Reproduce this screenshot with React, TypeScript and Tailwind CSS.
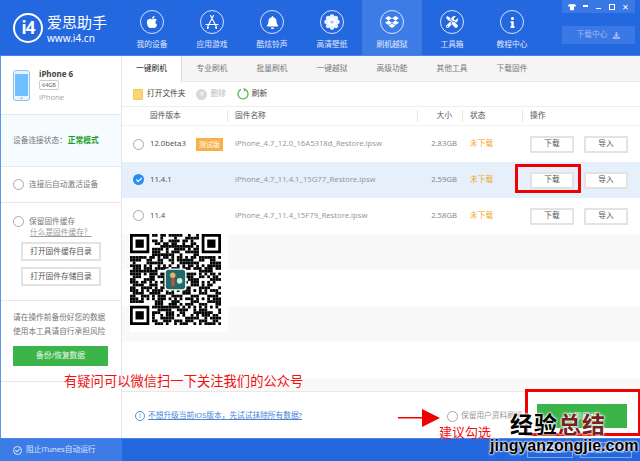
import React from "react";
import { FaApple, FaBell, FaDropbox, FaTools, FaInfo, FaTshirt, FaDownload, FaCheck } from "react-icons/fa";

const font = "font-['Noto_Sans','Noto_Sans_CJK_SC',sans-serif]";

function Ring({ children }: { children: React.ReactNode }) {
  return (
    <div className="w-6 h-6 rounded-full border border-white/80 flex items-center justify-center text-white">
      {children}
    </div>
  );
}

function AppStoreIcon() {
  return (
    <svg width="16" height="16" viewBox="0 0 16 16" fill="none" stroke="white" strokeWidth="1.1" strokeLinecap="round">
      <path d="M9.5 1.5 3.5 13M6.5 1.5l6 11.5M2 10.5h12M4.5 13.5l-1 1M11.5 13.5l1 1" />
    </svg>
  );
}

function FlowerIcon() {
  return (
    <svg width="16" height="16" viewBox="0 0 16 16" fill="white">
      {[0, 45, 90, 135, 180, 225, 270, 315].map((a) => (
        <ellipse key={a} cx="8" cy="3.6" rx="2.4" ry="3.4" transform={`rotate(${a} 8 8)`} opacity="0.9" />
      ))}
      <circle cx="8" cy="8" r="1.6" fill="#a9c6f3" />
    </svg>
  );
}

const navItems: { label: string; icon: React.ReactNode; active?: boolean }[] = [
  { label: "我的设备", icon: <FaApple size={14} /> },
  { label: "应用游戏", icon: <AppStoreIcon /> },
  { label: "酷炫铃声", icon: <FaBell size={13} /> },
  { label: "高清壁纸", icon: <FlowerIcon /> },
  { label: "刷机越狱", icon: <FaDropbox size={14} />, active: true },
  { label: "工具箱", icon: <FaTools size={12} /> },
  { label: "教程中心", icon: <FaInfo size={11} /> },
];

function Header() {
  return (
    <header className="h-14 flex bg-[#2468e0] shrink-0 border-b border-[#4a84e8]">
      <div className="w-[122px] pl-[13px] flex items-center gap-[4px] shrink-0">
        <div className="w-[30px] h-[30px] rounded-full border-2 border-white flex items-center justify-center text-white text-[17px] font-bold leading-none tracking-[-1px]">
          i4
        </div>
        <div className="flex flex-col text-white">
          <span className="text-[15px] leading-[20px]">爱思助手</span>
          <span className="text-[10px] leading-[12px]">www.i4.cn</span>
        </div>
      </div>
      <nav className="flex">
        {navItems.map((n) => (
          <div
            key={n.label}
            className={`w-[60px] flex flex-col items-center pt-[10px] gap-[4px] ${n.active ? "bg-[#3d7ce6]" : ""}`}
          >
            <Ring>{n.icon}</Ring>
            <span className="text-[7.7px] leading-[12px] text-white/85">{n.label}</span>
          </div>
        ))}
      </nav>
      <div className="ml-auto mr-[5px] w-[73px] flex flex-col">
        <div className="h-[13px] bg-[#3a78e5] flex items-center justify-around px-[2px] text-white">
          <FaTshirt size={8} />
          <span className="w-[5px] h-[4px] border-t-2 border-white" />
          <span className="w-[5px] h-[1px] mt-[4px] bg-white" />
          <span className="w-[6px] h-[6px] border border-white" />
          <span className="text-[8px] leading-none">✕</span>
        </div>
        <div className="mt-[13px] h-[18px] bg-[#3a78e5] flex items-center justify-center gap-[6px] text-[7.7px] text-white/50">
          下载中心
          <FaDownload size={7} />
        </div>
      </div>
    </header>
  );
}

function Radio() {
  return <span className="w-[11px] h-[11px] rounded-full border border-[#a8a8a8] bg-white shrink-0" />;
}

function OutlineBtn({ children, className = "" }: { children: React.ReactNode; className?: string }) {
  return (
    <div className={`border-2 border-[#e3e3e3] bg-white flex items-center justify-center text-[7.7px] text-[#555] ${className}`}>
      {children}
    </div>
  );
}

function Sidebar() {
  return (
    <aside className="w-[122px] shrink-0 border-l border-l-[#5f95ec] border-r border-r-[#e6e6e6] bg-white flex flex-col text-[7.7px] text-[#777]">
      <div className="h-[59px] pl-[12px] flex items-center gap-[9px] border-b border-[#e8e8e8]">
        <svg width="17" height="31" viewBox="0 0 17 31">
          <rect x="0.5" y="0.5" width="16" height="30" rx="2.5" fill="#eaf4ff" stroke="#8cc4f5" />
          <rect x="2" y="4" width="13" height="22" fill="#70c0ff" />
          <circle cx="8.5" cy="28.3" r="1" fill="#70c0ff" />
        </svg>
        <div className="flex flex-col items-start">
          <span className="text-[8px] leading-[11px] font-bold text-[#444]">iPhone 6</span>
          <span className="border border-[#ccc] rounded-[2px] text-[5.5px] leading-[8px] px-[2px] my-[1px] text-[#666]">64GB</span>
          <span className="text-[7.7px] leading-[12px] text-[#aaa]">iPhone</span>
        </div>
      </div>
      <div className="h-[52px] pl-[12px] flex items-center bg-[#f5fbff] border-b border-[#e8e8e8]">
        设备连接状态：<span className="text-[#16a01e] font-bold ml-[1px]">正常模式</span>
      </div>
      <div className="h-[36px] pl-[12px] flex items-center gap-[5px] border-b border-[#e8e8e8]">
        <Radio />
        连接后自动激活设备
      </div>
      <div className="h-[98px] pl-[12px] pt-[12px] border-b border-[#e8e8e8] flex flex-col">
        <div className="flex items-center gap-[5px] leading-[12px]">
          <Radio />
          保留固件缓存
        </div>
        <span className="ml-[17px] text-[7.7px] leading-[10px] underline text-[#999]">什么是固件缓存？</span>
        <OutlineBtn className="ml-[8px] mt-[5px] w-[80px] h-[19px] text-[#444]">打开固件缓存目录</OutlineBtn>
        <OutlineBtn className="ml-[8px] mt-[6px] w-[80px] h-[19px] text-[#444]">打开固件存储目录</OutlineBtn>
      </div>
      <div className="h-[81px] pl-[12px] pt-[9px] border-b border-[#e8e8e8]">
        <p className="leading-[14px]">请在操作前备份好您的数据</p>
        <p className="leading-[14px]">使用本工具请自行承担风险</p>
        <div className="mt-[8px] w-[95px] h-[20px] bg-[#3bb44a] flex items-center justify-center text-white/90 text-[7.7px]">
          备份/恢复数据
        </div>
      </div>
    </aside>
  );
}

const tabs = ["一键刷机", "专业刷机", "批量刷机", "一键越狱", "高级功能", "其他工具", "下载固件"];

function Tabs() {
  return (
    <div className="h-[26px] flex bg-[#f5f5f5] border-b border-[#e8e8e8] text-[7.7px] shrink-0">
      {tabs.map((t, i) => (
        <div
          key={t}
          className={`w-[60px] flex items-center justify-center ${i === 0 ? "bg-white text-[#222] border-r border-[#e0e0e0] h-[26px]" : "text-[#777]"}`}
        >
          {t}
        </div>
      ))}
    </div>
  );
}

function Toolbar() {
  return (
    <div className="h-[25px] flex items-center pl-[11px] text-[7.7px] text-[#444] border-b border-[#eeeeee] shrink-0">
      <span className="w-[10px] h-[11px] bg-[#fbd774] border border-[#f3c95e] rounded-[1px]" />
      <span className="ml-[4px]">打开文件夹</span>
      <span className="ml-[11px] w-[11px] h-[11px] rounded-full bg-[#d9d9d9] flex items-center justify-center text-white text-[8px] leading-none">×</span>
      <span className="ml-[3px] text-[#bbb]">删除</span>
      <svg className="ml-[11px]" width="12" height="12" viewBox="0 0 12 12" fill="none" stroke="#4db848" strokeWidth="1.2">
        <path d="M4 1.4A5 5 0 1 0 8 1.4" />
        <path d="M6.6 0.5 8.3 1.5 7 3" />
      </svg>
      <span className="ml-[3px]">刷新</span>
    </div>
  );
}

const colHead = "text-[7.7px] text-[#555] border-r border-[#e8e8e8] h-[12px] flex items-center";

function TableHead() {
  return (
    <div className="h-[19px] flex items-center shrink-0 border-b border-[#f0f0f0]">
      <div className={`${colHead} w-[106px] pl-[28px]`}>固件版本</div>
      <div className={`${colHead} w-[190px] pl-[7px]`}>固件名称</div>
      <div className={`${colHead} w-[45px] justify-end pr-[10px]`}>大小</div>
      <div className={`${colHead} w-[60px] pl-[7px]`}>状态</div>
      <div className="text-[7.7px] text-[#555] pl-[7px]">操作</div>
    </div>
  );
}

const rows = [
  { v: "12.0beta3", f: "iPhone_4.7_12.0_16A5318d_Restore.ipsw", s: "2.83GB", beta: true },
  { v: "11.4.1", f: "iPhone_4.7_11.4.1_15G77_Restore.ipsw", s: "2.59GB", sel: true },
  { v: "11.4", f: "iPhone_4.7_11.4_15F79_Restore.ipsw", s: "2.58GB" },
];

function Row({ r }: { r: (typeof rows)[number] }) {
  return (
    <div className={`h-9 flex items-center shrink-0 text-[7.7px] ${r.sel ? "bg-[#e5f0fb]" : "bg-white"}`}>
      <div className="w-[106px] pl-[11px] flex items-center">
        {r.sel ? (
          <span className="w-[11px] h-[11px] rounded-full bg-[#2a8cf0] flex items-center justify-center text-white shrink-0">
            <FaCheck size={6} />
          </span>
        ) : (
          <Radio />
        )}
        <span className="ml-[6px] w-[46px] text-[#555]">{r.v}</span>
        {r.beta && (
          <span className="w-[27px] h-[13px] bg-[#f8b04c] text-white text-[7px] leading-[13px] text-center">测试版</span>
        )}
      </div>
      <div className="w-[190px] pl-[7px] text-[#999] whitespace-nowrap">{r.f}</div>
      <div className="w-[45px] text-right pr-[6px] text-[#888]">{r.s}</div>
      <div className="w-[60px] pl-[7px] text-[#f5a623]">未下载</div>
      <div className="flex gap-[10px] pl-[7px]">
        <OutlineBtn className="w-[44px] h-[17px]">下载</OutlineBtn>
        <OutlineBtn className="w-[44px] h-[17px]">导入</OutlineBtn>
      </div>
    </div>
  );
}

const QR_FINDERS = [
  [0, 0],
  [26, 0],
  [0, 26],
];

function qrOn(x: number, y: number) {
  const h = (x * 7919 + y * 104729 + x * y * 31 + 13) % 97;
  return h % 2 === 0 || h % 5 === 0;
}

function QrCode() {
  const cells: React.ReactNode[] = [];
  const n = 33;
  for (let y = 0; y < n; y++) {
    for (let x = 0; x < n; x++) {
      const inFinder = QR_FINDERS.some(([fx, fy]) => x >= fx - 1 && x <= fx + 7 && y >= fy - 1 && y <= fy + 7);
      if (!inFinder && qrOn(x, y)) cells.push(<rect key={`${x}-${y}`} x={x} y={y} width="1" height="1" />);
    }
  }
  return (
    <svg width="91" height="91" viewBox="0 0 33 33" fill="#000">
      {cells}
      {QR_FINDERS.map(([fx, fy]) => (
        <g key={`${fx}-${fy}`}>
          <path d={`M${fx} ${fy}h7v7h-7z M${fx + 1} ${fy + 1}v5h5v-5z`} fillRule="evenodd" />
          <rect x={fx + 2} y={fy + 2} width="3" height="3" />
        </g>
      ))}
      <rect x="12.5" y="12.5" width="8" height="8" rx="1" fill="#fff" />
      <rect x="13" y="13" width="7" height="7" rx="1" fill="#1f6a6a" />
      <circle cx="15.5" cy="15" r="1" fill="#e8b060" />
      <rect x="15" y="16" width="1.2" height="3" fill="#c8503a" />
      <circle cx="18" cy="17" r="1" fill="#d8e8e0" />
    </svg>
  );
}

function Main() {
  return (
    <main className="flex-1 relative flex flex-col min-w-0 bg-white">
      <Tabs />
      <Toolbar />
      <TableHead />
      {rows.map((r) => (
        <Row key={r.v} r={r} />
      ))}
      <div className="h-9 bg-[#f9f9f9] shrink-0" />
      <div className="h-9 bg-white shrink-0" />
      <div className="h-9 bg-[#f9f9f9] shrink-0" />
      <div className="h-9 bg-white shrink-0" />
      <div className="h-[14px] bg-[#f9f9f9] shrink-0 border-b border-[#e8e8e8]" />
      <div className="flex-1 flex items-center pl-[13px] pt-[2px] text-[7.7px]">
        <span className="w-[10px] h-[10px] rounded-full border border-[#4a90e2] text-[#4a90e2] text-[7px] leading-[8px] text-center">i</span>
        <span className="ml-[3px] text-[#4a84d8] underline">不想升级当前iOS版本，先试试抹除所有数据?</span>
        <div className="ml-auto mr-[13px] flex items-center">
          <Radio />
          <span className="ml-[3px] mr-[6px] text-[#999] w-[70px] whitespace-nowrap">保留用户资料刷机</span>
          <div className="w-[90px] h-6 bg-[#3bb44a] flex items-center justify-center text-white text-[8px]">立即刷机</div>
        </div>
      </div>
      <div className="absolute left-[8px] top-[178px] w-[98px] h-[98px] bg-white">
        <QrCode />
      </div>
    </main>
  );
}

function Footer() {
  return (
    <footer className="h-[23px] shrink-0 flex bg-[#2468e0] border-t border-[#4a84e8] text-[7.7px] text-white/80">
      <div className="w-[122px] bg-[#3d7ce6] flex items-center pl-[13px] gap-[4px]">
        <span className="w-[9px] h-[9px] rounded-full border border-white/80 flex items-center justify-center">
          <FaCheck size={5} />
        </span>
        阻止iTunes自动运行
      </div>
      <div className="ml-auto mr-[8px] flex items-center gap-[7px]">
        <span className="mr-[6px]">V7.61</span>
        <span className="w-[46px] h-[16px] border border-white/40 flex items-center justify-center">检查更新</span>
        <span className="w-[52px] h-[16px] border border-white/40 flex items-center justify-center">微信公众号</span>
      </div>
    </footer>
  );
}

function Overlays() {
  return (
    <>
      <div className="absolute left-[515px] top-[164px] w-[66px] h-[29px] border-[3px] border-[#f00000]" />
      <div className="absolute left-[525px] top-[389px] w-[115px] h-[47px] border-[3px] border-r-[2px] border-[#f00000]" />
      <div className="absolute left-[64px] top-[372px] text-[13.3px] leading-[18px] text-[#f01010] whitespace-nowrap">
        有疑问可以微信扫一下关注我们的公众号
      </div>
      <div className="absolute left-[439px] top-[423px] text-[13px] leading-[18px] text-[#f01010] whitespace-nowrap">建议勾选</div>
      <svg className="absolute left-[398px] top-[408px]" width="44" height="20" viewBox="0 0 44 20" fill="#f00000">
        <rect x="0" y="9" width="26" height="1.5" />
        <path d="M24 1 42 10 24 19z" />
      </svg>
      <div className="absolute left-[510px] top-[410px] text-[23px] leading-[28px] font-bold whitespace-nowrap tracking-[1px] [text-shadow:0_0_2px_#fff,0_0_2px_#fff,0_0_3px_#fff]">
        <span className="text-black">经验</span>
        <span className="text-[#7a1f22]">总结</span>
      </div>
      <div className="absolute left-[490px] top-[436px] text-[16px] leading-[20px] font-bold text-black whitespace-nowrap font-['Liberation_Sans',sans-serif] [text-shadow:0_0_2px_#fff,0_0_2px_#fff,0_0_3px_#fff]">
        jingyanzongjie.com
      </div>
    </>
  );
}

export default function App() {
  return (
    <div className={`relative w-[640px] h-[461px] overflow-hidden flex flex-col bg-white ${font}`}>
      <Header />
      <div className="flex-1 flex min-h-0">
        <Sidebar />
        <Main />
      </div>
      <Footer />
      <Overlays />
    </div>
  );
}
